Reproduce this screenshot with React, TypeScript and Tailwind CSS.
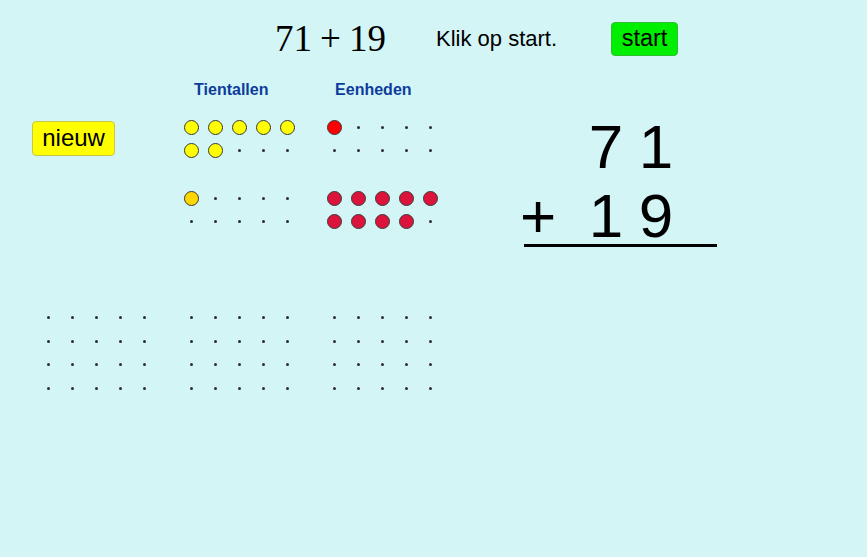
import React from "react";

type Cell = "y" | "g" | "r" | "c" | ".";

const fill: Record<string, string> = {
  y: "bg-[#ffff00]",
  g: "bg-[#ffd700]",
  r: "bg-[#ff0000]",
  c: "bg-[#dc143c]",
};

function DotGrid({ cells }: { cells: string }) {
  return (
    <div className="grid grid-cols-[repeat(5,23.8px)] auto-rows-[23.8px] w-fit">
      {cells.split("").map((c, i) => (
        <div key={i} className="flex items-center justify-center">
          {c === "." ? (
            <div className="w-[3px] h-[3px] rounded-full bg-[#2e2e2e]" />
          ) : (
            <div className={"w-[15px] h-[15px] rounded-full border border-[#3a3a3a] " + fill[c as Cell]} />
          )}
        </div>
      ))}
    </div>
  );
}

export default function App() {
  const sans = { fontFamily: '"Liberation Sans", Arial, sans-serif' };
  const empty = ".".repeat(20);
  return (
    <div className="w-[867px] h-[557px] bg-[#d3f5f5] overflow-hidden text-black flex flex-col" style={sans}>
      {/* top bar */}
      <header className="h-[80px] pb-[2px] pl-[275px] flex items-center">
        <div
          className="w-[161px] flex items-baseline gap-[8px] text-[37px] leading-[46px]"
          style={{ fontFamily: '"Liberation Serif", "Times New Roman", serif' }}
        >
          <span>71</span>
          <span>+</span>
          <span>19</span>
        </div>
        <div className="w-[175px] text-[22px] leading-[30px]">Klik op start.</div>
        <button className="w-[67px] h-[34px] rounded-[4px] bg-[#00ee00] border border-[#2fbf2f] flex items-center justify-center text-[23.5px] leading-none pb-[1px]">
          start
        </button>
      </header>

      {/* main */}
      <main className="ml-[37.1px] grid grid-cols-[119px_119px_119px_auto] grid-rows-[35.2px_71px_119.2px_95.2px] gap-x-[24px] items-start">
        {/* labels row */}
        <div />
        <div className="pl-[14px] font-bold text-[16px] leading-[20px] text-[#0c3c9c]">Tientallen</div>
        <div className="pl-[12px] font-bold text-[16px] leading-[20px] text-[#0c3c9c]">Eenheden</div>

        {/* vertical sum */}
        <div className="row-span-3 ml-[46px] mt-[32px] flex flex-col">
          <div className="grid grid-cols-[52px_17px_50px_50px] auto-rows-[69px] text-[62px] leading-[69px] text-center">
            <span></span>
            <span></span>
            <span>7</span>
            <span>1</span>
            <span>+</span>
            <span></span>
            <span>1</span>
            <span>9</span>
          </div>
          <div className="-mt-[6px] ml-[12px] w-[193px] h-[3px] bg-black" />
        </div>

        {/* 71 */}
        <div className="self-center -mt-[25px] -ml-[5px]">
          <button className="w-[83px] h-[35px] rounded-[4px] bg-[#ffff00] border border-[#c8c848] flex items-center justify-center text-[24px] leading-none pb-[1px]">
            nieuw
          </button>
        </div>
        <DotGrid cells={"yyyyy" + "yy..."} />
        <DotGrid cells={"r...." + "....."} />

        {/* 19 */}
        <div />
        <DotGrid cells={"g...." + "....."} />
        <DotGrid cells={"ccccc" + "cccc."} />

        {/* answer area */}
        <DotGrid cells={empty} />
        <DotGrid cells={empty} />
        <DotGrid cells={empty} />
      </main>
    </div>
  );
}
